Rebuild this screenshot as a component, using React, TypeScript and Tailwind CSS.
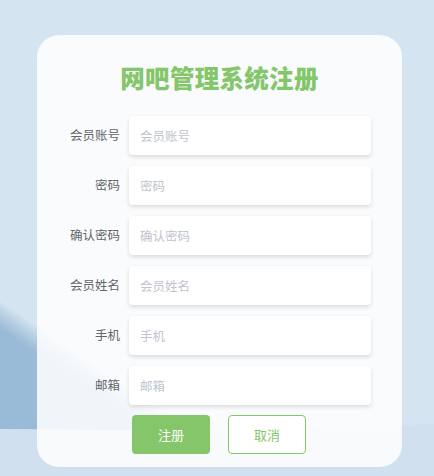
import React from "react";

const fields = [
  { label: "会员账号", ph: "会员账号", type: "text" },
  { label: "密码", ph: "密码", type: "password" },
  { label: "确认密码", ph: "确认密码", type: "password" },
  { label: "会员姓名", ph: "会员姓名", type: "text" },
  { label: "手机", ph: "手机", type: "text" },
  { label: "邮箱", ph: "邮箱", type: "text" },
];

export default function App() {
  return (
    <div
      className="relative w-[434px] h-[476px] overflow-hidden bg-[#d4e4f1]"
      style={{ fontFamily: '"Noto Sans CJK SC", "Noto Sans", sans-serif' }}
    >
      <svg className="absolute inset-0" width="434" height="476" viewBox="0 0 434 476">
        <defs>
          <linearGradient id="w" gradientUnits="userSpaceOnUse" x1="8" y1="306" x2="-5" y2="325">
            <stop offset="0" stopColor="#d4e4f1" />
            <stop offset="0.5" stopColor="#b4cde2" />
            <stop offset="1" stopColor="#9abbd8" />
          </linearGradient>
        </defs>
        <path d="M0 280 L215 431 L0 429 Z" fill="url(#w)" />
        <path d="M0 429 Q200 434 434 424 L434 476 L0 476 Z" fill="#d0e0ee" />
      </svg>
      <div className="relative ml-[37px] mt-[35px] w-[365px] h-[432px] rounded-[22px] bg-white/85 pt-[27px] flex flex-col">
        <h1 className="text-center text-[24.5px] leading-[32px] font-black text-[#84c66a] tracking-[0.3px]">
          网吧管理系统注册
        </h1>
        <div className="mt-[22px] flex flex-col gap-[11px]">
          {fields.map((f) => (
            <div key={f.label} className="flex items-center">
              <label className="w-[83px] text-right text-[12.5px] text-[#63656b]">{f.label}</label>
              <input
                type={f.type}
                placeholder={f.ph}
                className="ml-[9px] w-[242px] h-[39px] rounded-[4px] bg-white px-[11px] text-[12.5px] text-[#606266] placeholder:text-[#c0c4cc] outline-none shadow-[0_2px_4px_rgba(0,0,0,0.13)]"
              />
            </div>
          ))}
        </div>
        <div className="mt-[10px] ml-[95px] flex gap-[18px]">
          <button className="w-[78px] h-[39px] rounded-[4px] bg-[#86c66a] text-white text-[13px]">注册</button>
          <button className="w-[78px] h-[39px] rounded-[4px] bg-white border border-[#86c66a] text-[#86c66a] text-[13px]">取消</button>
        </div>
      </div>
    </div>
  );
}
